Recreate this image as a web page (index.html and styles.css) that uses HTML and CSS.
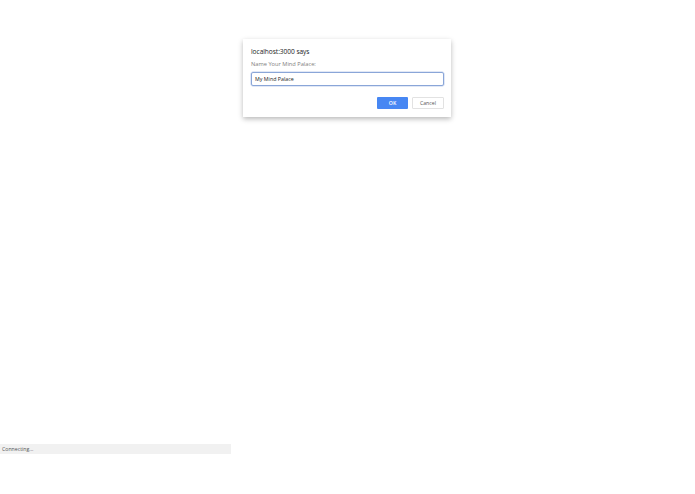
FILE: index.html
```html
<!DOCTYPE html>
<html>
<head>
<meta charset="utf-8">
<link rel="stylesheet" href="styles.css">
</head>
<body>
<div class="dialog">
  <div class="title">localhost:3000 says</div>
  <div class="label">Name Your Mind Palace:</div>
  <div class="input">My Mind Palace</div>
  <div class="actions">
    <div class="btn ok">OK</div>
    <div class="btn cancel">Cancel</div>
  </div>
</div>
<div class="status">Connecting...</div>
</body>
</html>
```

FILE: styles.css
```css
html, body {
  margin: 0;
  padding: 0;
  background: #ffffff;
  font-family: "Open Sans", "Noto Sans", sans-serif;
}
.dialog {
  position: absolute;
  top: 39px;
  left: 243px;
  width: 208px;
  height: 78px;
  box-sizing: border-box;
  background: #ffffff;
  box-shadow: 0 2px 5px rgba(0, 0, 0, 0.28);
  padding: 7px 7px 0 8px;
  display: flex;
  flex-direction: column;
}
.title {
  font-size: 6.6px;
  line-height: 11px;
  color: #222222;
  letter-spacing: -0.05px;
}
.label {
  margin-top: 3px;
  font-size: 5.7px;
  line-height: 9px;
  color: #808080;
}
.input {
  margin-top: 3px;
  height: 14px;
  box-sizing: border-box;
  border: 1px solid #8aa6d8;
  border-radius: 2px;
  box-shadow: 0 0 0 0.5px #c3d2ee;
  font-size: 5.3px;
  line-height: 12px;
  padding-left: 3px;
  color: #222222;
}
.actions {
  margin-top: 11px;
  display: flex;
  justify-content: flex-end;
  gap: 4px;
}
.btn {
  width: 31px;
  height: 12px;
  box-sizing: border-box;
  border-radius: 1px;
  font-size: 5.2px;
  line-height: 12px;
  text-align: center;
}
.ok {
  background: #4787f3;
  color: #ffffff;
  font-weight: 600;
}
.cancel {
  width: 32px;
  background: #ffffff;
  border: 1px solid #e2e2e2;
  line-height: 10px;
  color: #555555;
}
.status {
  position: fixed;
  left: 0;
  top: 444px;
  width: 231px;
  height: 10px;
  background: #f1f1f1;
  font-size: 5.2px;
  line-height: 10px;
  padding-left: 2px;
  box-sizing: border-box;
  color: #555555;
}
```
